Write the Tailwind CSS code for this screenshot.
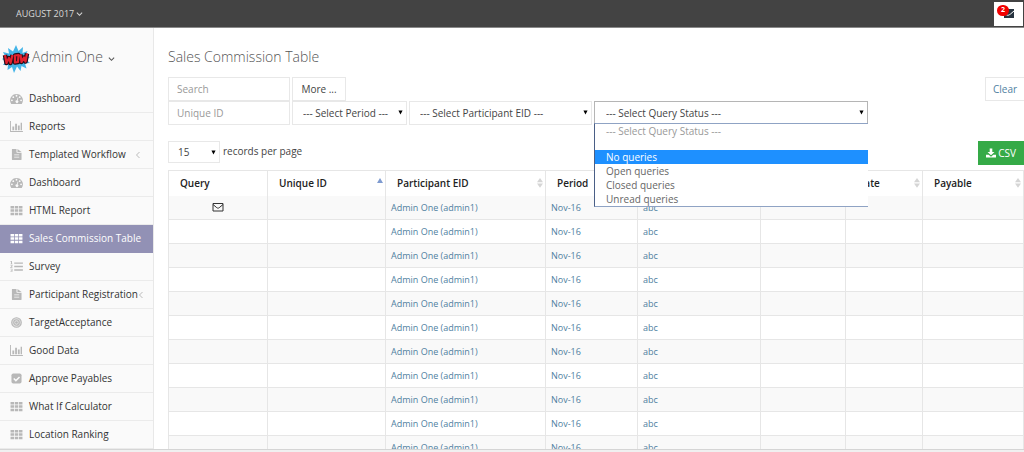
<!DOCTYPE html>
<html lang="en">
<head>
  <meta charset="UTF-8" />
  <meta name="viewport" content="width=device-width, initial-scale=1" />
  <title>Sales Commission Table</title>
  <script src="https://cdn.jsdelivr.net/npm/@tailwindcss/browser@4"></script>
</head>
<body class="flex h-screen flex-col overflow-hidden bg-white font-['Open_Sans','Noto_Sans',sans-serif] text-[10px] text-[#444]">

  <!-- Icon sprite -->
  <svg class="hidden">
    <symbol id="dashboard" viewBox="0 0 14 12">
      <path fill="currentColor" fill-rule="evenodd" d="M7 1a7 7 0 0 0-5.9 10.7c.1.2.3.3.5.3h10.800c.2 0 .4-.1.5-.3A7 7 0 0 0 7 1zM2 7a1 1 0 1 1 0 2 1 1 0 0 1 0-2zm1.500-3.500a1 1 0 1 1 0 2 1 1 0 0 1 0-2zM7 2a1 1 0 1 1 0 2 1 1 0 0 1 0-2zm3.500 1.500a1 1 0 1 1 0 2 1 1 0 0 1 0-2zM12 7a1 1 0 1 1 0 2 1 1 0 0 1 0-2zM8.300 4.900l.7.200-.8 3a1.500 1.500 0 1 1-.8-.2z"/>
    </symbol>
    <symbol id="chart" viewBox="0 0 14 12">
      <path fill="currentColor" d="M0 0h1v11h13v1H0zM2.500 6h2v4h-2zM5.500 3h2v7h-2zM8.500 5h2v5h-2zM11.500 2h1.500v8h-1.500z"/>
    </symbol>
    <symbol id="file" viewBox="0 0 14 12">
      <path fill="currentColor" fill-rule="evenodd" d="M2.500 0H7v3.500c0 .4.300.5.500.5H12.500v7.500c0 .3-.2.5-.5.5H2.500c-.3 0-.5-.2-.5-.5V.5c0-.3.200-.5.500-.5zM4.500 6v.8h5.500V6zm0 2.500v.8h5.500v-.8z"/>
      <path fill="currentColor" d="M8 0l4.500 3.300H8z"/>
    </symbol>
    <symbol id="grid" viewBox="0 0 14 12">
      <path fill="currentColor" d="M.5 1h3.800v2.700H.5zM5.100 1h3.800v2.700H5.100zM9.700 1h3.800v2.700H9.700zM.5 4.700h3.800v2.700H.5zM5.100 4.700h3.800v2.700H5.100zM9.700 4.700h3.800v2.700H9.700zM.5 8.400h3.800v2.700H.5zM5.100 8.400h3.800v2.700H5.100zM9.700 8.400h3.800v2.700H9.700z"/>
    </symbol>
    <symbol id="list" viewBox="0 0 14 12">
      <path fill="currentColor" d="M4.500 1.500H14V3H4.500zM4.500 5.300H14v1.500H4.500zM4.500 9H14v1.500H4.500zM1 0h1v3h.7v.6H.4V3H1V1H.4V.5zM.4 4.300h2.200v1.500L1.300 7h1.400v.7H.2V7l1.500-1.500V5H.4zM.4 8.400h2.200v3.400H.3v-.6h1.500v-.8H.8v-.6h1V9H.4z"/>
    </symbol>
    <symbol id="target" viewBox="0 0 14 12">
      <circle cx="7" cy="6" r="5.200" fill="#e2e2e2" stroke="currentColor" stroke-width="1.300"/>
      <circle cx="7" cy="6" r="3" fill="none" stroke="currentColor" stroke-width="1.300"/>
      <circle cx="7" cy="6" r="1.400" fill="currentColor"/>
    </symbol>
    <symbol id="check" viewBox="0 0 14 12">
      <rect x="1.500" y=".5" width="11" height="11" rx="2" fill="currentColor"/>
      <path d="M4 6l2.300 2.300 4-4" fill="none" stroke="#fafafa" stroke-width="1.600"/>
    </symbol>
    <symbol id="envelope" viewBox="0 0 12 10">
      <path d="M1 1.500h10v7.500H1zM1 2.500l3.800 3.200c.8.600 1.600.600 2.400 0L11 2.500" fill="none" stroke="currentColor" stroke-width="1"/>
    </symbol>
    <symbol id="down" viewBox="0 0 8 6">
      <path d="M1 1.500l3 3 3-3" fill="none" stroke="currentColor" stroke-width="1.200"/>
    </symbol>
    <symbol id="left" viewBox="0 0 6 8">
      <path d="M4.500 1l-3 3 3 3" fill="none" stroke="currentColor" stroke-width="1"/>
    </symbol>
    <symbol id="caret" viewBox="0 0 6 6">
      <path d="M.5.500h5L3 5.500z" fill="currentColor"/>
    </symbol>
    <symbol id="sort" viewBox="0 0 6 10">
      <path d="M3 0l3 4.300H0zM0 5.500h6L3 9.800z" fill="currentColor"/>
    </symbol>
    <symbol id="sort-up" viewBox="0 0 6 10">
      <path d="M3 0l3 5H0z" fill="currentColor"/>
    </symbol>
    <symbol id="download" viewBox="0 0 10 10">
      <path fill="currentColor" d="M3.700.500h2.600V4h2.200L5 7.300 1.500 4h2.200zM0 6.800h2.700L5 8.800l2.300-2H10v2.700H0z"/>
    </symbol>
  </svg>

  <!-- Top bar -->
  <header class="flex h-7 shrink-0 items-center justify-between border-b border-[#8a8a8a] bg-[#434343] pr-px pl-4">
    <button class="flex items-center gap-[2px] text-[9px] text-[#d8d8d8]">AUGUST 2017 <svg class="h-[6px] w-[7px]"><use href="#down"/></svg></button>
    <button class="relative flex h-6 w-[29px] items-center justify-center bg-white text-[#27333f]" aria-label="Messages">
      <svg class="h-[9px] w-[10px]" viewBox="0 0 10 9"><path d="M0 0h10v9H0z" fill="currentColor"/><path d="M2 5.500c2 1.500 3 .5 4.500-.5L10 2" fill="none" stroke="#fff"/></svg>
      <span class="absolute top-[3px] left-[3px] flex h-[11px] w-3 items-center justify-center rounded-full bg-[#f30000] text-[7px] font-bold text-white">2</span>
    </button>
  </header>

  <div class="flex min-h-0 flex-1">

    <!-- Sidebar -->
    <aside class="w-[154px] shrink-0 overflow-hidden border-r border-[#e8e8e8] bg-[#fafafa]">
      <button class="flex h-[57px] w-full items-center text-[14px] font-light text-[#555]">
        <svg class="mt-1 ml-[2px] h-7 w-7 shrink-0" viewBox="0 0 28 28">
          <path d="M14 0l2.500 6 4.500-4-.5 6 5-2-2 5 4.500 1-3.500 3 3.500 3-5 .5 1.500 5-5-2.500-1 5-3.500-4.500L12 28l-2-6-4.500 3L6 20l-5 0 2.500-3.500L0 14l3.500-2L1 7l6 1.500L6 3l5 3.500z" fill="#45b5e8"/>
          <g fill="none" stroke-linejoin="round">
            <path d="M3 10l1.500 8 2.500-5 1.500 5 2-8M13 10.500l3.500-.5-.5 7-3 .5zM18.500 9.500l1 7.500 2.500-4.500 1.500 4 1.500-8" stroke="#26101c" stroke-width="4.500"/>
            <path d="M3 10l1.500 8 2.500-5 1.500 5 2-8M13 10.500l3.500-.5-.5 7-3 .5zM18.500 9.500l1 7.500 2.500-4.500 1.500 4 1.500-8" stroke="#e3212e" stroke-width="2.200"/>
          </g>
        </svg>
        <span class="ml-[2px]">Admin One</span>
        <svg class="mt-1 ml-[5px] h-[6px] w-[7px]"><use href="#down"/></svg>
      </button>
      <nav id="menu"></nav>
    </aside>

    <!-- Content -->
    <main class="min-w-0 flex-1 overflow-hidden pt-[18px] pl-[14px]">
      <h1 class="mb-[10px] text-[14px] leading-[21px] font-light text-[#555]">Sales Commission Table</h1>

      <form class="flex flex-col">
        <div class="flex gap-[2px]">
          <input type="text" aria-label="Search" placeholder="Search" class="h-6 w-[122px] border border-[#e8e8e8] px-2 placeholder:text-[#999]" />
          <button type="button" class="h-6 w-[54px] border border-[#e8e8e8]">More ...</button>
          <button type="reset" class="ml-auto h-6 w-[39px] border border-r-0 border-[#e8e8e8] text-[#4f7f9f]">Clear</button>
        </div>
        <div class="flex gap-[2px]">
          <input type="text" aria-label="Unique ID" placeholder="Unique ID" class="h-6 w-[122px] border border-[#e8e8e8] px-2 placeholder:text-[#999]" />
          <div class="relative w-[115px]">
            <select aria-label="Period" class="h-6 w-full appearance-none border border-[#e8e8e8] px-[10px]"><option>--- Select Period ---</option></select>
            <svg class="pointer-events-none absolute top-[9px] right-1 h-[5px] w-[5px] text-black"><use href="#caret"/></svg>
          </div>
          <div class="relative w-[183px]">
            <select aria-label="Participant EID" class="h-6 w-full appearance-none border border-[#e8e8e8] px-[10px]"><option>--- Select Participant EID ---</option></select>
            <svg class="pointer-events-none absolute top-[9px] right-1 h-[5px] w-[5px] text-black"><use href="#caret"/></svg>
          </div>
          <div class="relative w-[274px]">
            <select aria-label="Query status" class="h-6 w-full appearance-none border border-[#b5b5b5] px-[11px]"><option>--- Select Query Status ---</option></select>
            <svg class="pointer-events-none absolute top-[9px] right-1 h-[5px] w-[5px] text-black"><use href="#caret"/></svg>
            <!-- Open option list -->
            <ul role="listbox" aria-label="Query status options" class="absolute top-[22px] left-0 z-10 w-full border-y border-l border-y-[#8fa3c4] border-l-[#4a5f86] bg-white text-[#666]">
              <li role="option" class="h-[14px] px-[11px] leading-[14px] text-[#999]">--- Select Query Status ---</li>
              <li role="presentation" class="h-3"></li>
              <li role="option" aria-selected="true" class="h-[14px] bg-[#1e90ff] px-[11px] leading-[14px] text-white">No queries</li>
              <li role="option" class="h-[14px] px-[11px] leading-[14px]">Open queries</li>
              <li role="option" class="h-[14px] px-[11px] leading-[14px]">Closed queries</li>
              <li role="option" class="h-[14px] px-[11px] leading-[14px]">Unread queries</li>
            </ul>
          </div>
        </div>
      </form>

      <div class="mt-4 flex items-start justify-between">
        <label class="flex items-start gap-[3px]">
          <span class="relative block w-[52px]">
            <select class="h-[22px] w-full appearance-none border border-[#e8e8e8] px-[9px]"><option>15</option></select>
            <svg class="pointer-events-none absolute top-[9px] right-1 h-[5px] w-[5px] text-black"><use href="#caret"/></svg>
          </span>
          <span class="leading-[20px]">records per page</span>
        </label>
        <button class="flex h-6 w-[46px] items-center justify-center gap-[2px] bg-[#35aa47] text-white"><svg class="h-[10px] w-[10px]"><use href="#download"/></svg>CSV</button>
      </div>

      <table class="mt-[5px] w-full table-fixed border-collapse border border-[#e6e6e6]">
        <colgroup>
          <col class="w-[99px]" /><col class="w-[118px]" /><col class="w-[160px]" /><col class="w-[92px]" />
          <col class="w-[123px]" /><col class="w-[85px]" /><col class="w-[77px]" /><col />
        </colgroup>
        <thead><tr id="tableHead" class="h-[25px]"></tr></thead>
        <tbody id="tableBody"></tbody>
      </table>
    </main>
  </div>

  <!-- Horizontal scroll track -->
  <div class="h-[3px] shrink-0 border-t border-[#d5d5d5] bg-[#f0f0f0]"></div>

  <script>
    const menuItems = [
      { label: 'Dashboard', icon: 'dashboard' },
      { label: 'Reports', icon: 'chart' },
      { label: 'Templated Workflow', icon: 'file', sub: true },
      { label: 'Dashboard', icon: 'dashboard' },
      { label: 'HTML Report', icon: 'grid' },
      { label: 'Sales Commission Table', icon: 'grid', active: true },
      { label: 'Survey', icon: 'list' },
      { label: 'Participant Registration', icon: 'file', sub: true },
      { label: 'TargetAcceptance', icon: 'target' },
      { label: 'Good Data', icon: 'chart' },
      { label: 'Approve Payables', icon: 'check' },
      { label: 'What If Calculator', icon: 'grid' },
      { label: 'Location Ranking', icon: 'grid' }
    ];

    document.getElementById('menu').innerHTML = menuItems.map(item => `
      <a href="#" class="flex h-7 items-center border-b pl-[10px] whitespace-nowrap ${item.active ? 'border-[#9291b5] bg-[#9291b5] text-white' : 'border-[#ebebeb] text-[#333]'}">
        <svg class="h-[11px] w-[13px] shrink-0 ${item.active ? 'text-white' : 'text-[#b8b8b8]'}"><use href="#${item.icon}"/></svg>
        <span class="ml-[6px]">${item.label}</span>
        ${item.sub ? '<svg class="mr-3 ml-auto h-2 w-[6px] shrink-0 text-[#bbb]"><use href="#left"/></svg>' : ''}
      </a>`).join('');

    const columns = ['Query', 'Unique ID', 'Participant EID', 'Period', 'Name', 'Amount', 'Date', 'Payable'];

    document.getElementById('tableHead').innerHTML = columns.map((name, i) => `
      <th class="border-r border-[#e6e6e6] p-0 text-left font-semibold text-[#222]">
        <div class="flex items-center justify-between pr-[2px] pl-[11px]">${name}
          ${i === 0 ? '' : i === 1 ? '<svg class="h-[10px] w-[6px] text-[#7f9bd0]"><use href="#sort-up"/></svg>' : '<svg class="h-[10px] w-[6px] text-[#d5d5d5]"><use href="#sort"/></svg>'}
        </div>
      </th>`).join('');

    const tbody = document.getElementById('tableBody');
    for (let i = 0; i < 11; i++) {
      const tr = document.createElement('tr');
      tr.className = 'h-6 border-b border-[#e6e6e6] text-[9px] odd:bg-[#f9f9f9] *:border-r *:border-[#e6e6e6] *:p-0 *:pl-[5px]';
      tr.innerHTML = `
        <td>${i === 0 ? '<svg class="ml-[38px] h-[10px] w-3 text-[#333]"><use href="#envelope"/></svg>' : ''}</td>
        <td></td>
        <td><a href="#" class="text-[#4f7f9f]">Admin One (admin1)</a></td>
        <td><a href="#" class="text-[#4f7f9f]">Nov-16</a></td>
        <td><a href="#" class="text-[#4f7f9f]">abc</a></td>
        <td></td>
        <td></td>
        <td></td>`;
      tbody.appendChild(tr);
    }
  </script>

</body>
</html>
